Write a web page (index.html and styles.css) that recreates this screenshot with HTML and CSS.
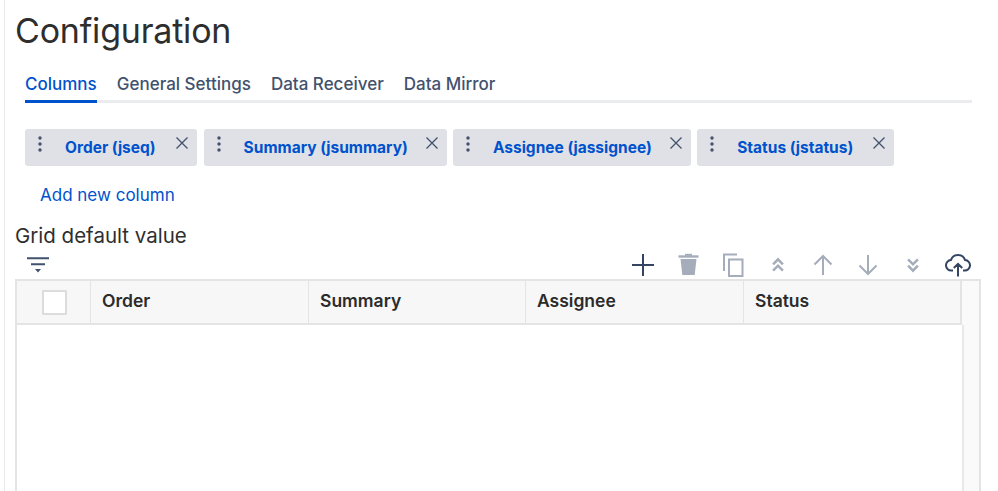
FILE: index.html
```html
<!DOCTYPE html>
<html lang="en">

<head>
  <meta charset="UTF-8">
  <title>Configuration</title>
  <link rel="stylesheet" href="styles.css">
</head>

<body>
  <div class="page">
    <h1>Configuration</h1>

    <div class="tabs">
      <a class="tab active">Columns</a>
      <a class="tab">General Settings</a>
      <a class="tab">Data Receiver</a>
      <a class="tab">Data Mirror</a>
    </div>

    <div class="chips">
      <div class="chip chip-order">
        <svg class="dots" viewBox="0 0 4 16"><circle cx="2" cy="2" r="1.7"/><circle cx="2" cy="8" r="1.7"/><circle cx="2" cy="14" r="1.7"/></svg>
        <span class="chip-label">Order (jseq)</span>
        <svg class="close" viewBox="0 0 12 12"><path d="M.5.5l11 11M11.5.5l-11 11"/></svg>
      </div>
      <div class="chip chip-summary">
        <svg class="dots" viewBox="0 0 4 16"><circle cx="2" cy="2" r="1.7"/><circle cx="2" cy="8" r="1.7"/><circle cx="2" cy="14" r="1.7"/></svg>
        <span class="chip-label">Summary (jsummary)</span>
        <svg class="close" viewBox="0 0 12 12"><path d="M.5.5l11 11M11.5.5l-11 11"/></svg>
      </div>
      <div class="chip chip-assignee">
        <svg class="dots" viewBox="0 0 4 16"><circle cx="2" cy="2" r="1.7"/><circle cx="2" cy="8" r="1.7"/><circle cx="2" cy="14" r="1.7"/></svg>
        <span class="chip-label">Assignee (jassignee)</span>
        <svg class="close" viewBox="0 0 12 12"><path d="M.5.5l11 11M11.5.5l-11 11"/></svg>
      </div>
      <div class="chip chip-status">
        <svg class="dots" viewBox="0 0 4 16"><circle cx="2" cy="2" r="1.7"/><circle cx="2" cy="8" r="1.7"/><circle cx="2" cy="14" r="1.7"/></svg>
        <span class="chip-label">Status (jstatus)</span>
        <svg class="close" viewBox="0 0 12 12"><path d="M.5.5l11 11M11.5.5l-11 11"/></svg>
      </div>
    </div>

    <a class="add-link">Add new column</a>

    <h2>Grid default value</h2>

    <div class="toolbar">
      <svg class="filter" viewBox="0 0 22 16"><path class="dark" d="M0 1.2h22M4 7.2h14"/><path class="fill-dark" d="M8 12h6l-3 3.5z"/></svg>
      <div class="actions">
        <svg class="icon dark" viewBox="0 0 24 24"><path d="M12 1v22M1 12h22"/></svg>
        <svg class="icon" viewBox="0 0 24 24"><path class="fill-grey" d="M4.500 6h16l-1.800 16H6.300z"/><path d="M2.500 3.500h20" stroke-width="2.400"/><path d="M9 1.800h7" stroke-width="2"/></svg>
        <svg class="icon" viewBox="0 0 24 24"><path d="M8 23V6.500h13.500V23zM3 18V1.500h13"/></svg>
        <svg class="icon small" viewBox="0 0 24 24"><path d="M5 11l7-7 7 7M5 20l7-7 7 7"/></svg>
        <svg class="icon" viewBox="0 0 24 24"><path d="M12 22V3M3.500 11.500L12 3l8.500 8.500"/></svg>
        <svg class="icon" viewBox="0 0 24 24"><path d="M12 2v19M3.500 12.500L12 21l8.500-8.500"/></svg>
        <svg class="icon small" viewBox="0 0 24 24"><path d="M5 4l7 7 7-7M5 13l7 7 7-7"/></svg>
        <svg class="icon cloud" viewBox="0 0 26 24"><path d="M8 17.500H6.500a5.200 5.200 0 0 1-.6-10.400 7.500 7.500 0 0 1 14.200 0 5.200 5.200 0 0 1-.6 10.400H18M13 23.500V11M8.800 15L13 10.800 17.200 15"/></svg>
      </div>
    </div>

    <div class="grid">
      <div class="grid-head">
        <div class="cell cell-check"><span class="checkbox"></span></div>
        <div class="cell">Order</div>
        <div class="cell">Summary</div>
        <div class="cell">Assignee</div>
        <div class="cell">Status</div>
      </div>
      <div class="grid-body"></div>
    </div>
  </div>
</body>

</html>
```

FILE: styles.css
```css
html,
body {
  height: 100%;
}

body {
  margin: 0;
  overflow: hidden;
  background-color: #FFFFFF;
  font-family: Inter, "Liberation Sans", sans-serif;
  color: #2E2E2E;
}

.page {
  box-sizing: border-box;
  height: 491px;
  margin-left: 4px;
  padding: 0 16px 0 10px;
  border-left: 1px solid #EBEBEB;
}

h1 {
  margin: 0;
  padding-top: 10px;
  font-size: 34px;
  font-weight: 400;
  line-height: 41px;
  letter-spacing: -0.2px;
}

.tabs {
  display: flex;
  gap: 20px;
  margin: 22px 10px 0 10px;
  border-bottom: 3px solid #EBECF0;
}

.tab {
  padding: 0 0 4px;
  margin-bottom: -3px;
  border-bottom: 3px solid transparent;
  font-size: 17px;
  font-weight: 500;
  line-height: 23px;
  color: #42526E;
}

.tab.active {
  color: #0052CC;
  border-bottom-color: #0052CC;
}

.chips {
  display: flex;
  gap: 6.300px;
  margin: 26px 0 0 10px;
}

.chip {
  box-sizing: border-box;
  display: flex;
  height: 37px;
  padding: 7px 9px 0 13px;
  border-radius: 3px;
  background-color: #DFE1E6;
}

.chip-order {
  width: 172.300px;
}

.chip-summary {
  width: 243px;
}

.chip-assignee {
  width: 238px;
}

.chip-status {
  width: 197px;
}

.dots {
  flex: none;
  width: 4px;
  height: 16px;
  fill: #42526E;
}

.chip-label {
  flex: 1;
  margin: 2px 0 0 23px;
  font-size: 15.500px;
  font-weight: 700;
  line-height: 20px;
  color: #0052CC;
  white-space: nowrap;
}

.close {
  flex: none;
  width: 12px;
  height: 12px;
  margin-top: 1px;
  fill: none;
  stroke: #42526E;
  stroke-width: 1.300;
}

.add-link {
  display: block;
  margin: 18px 0 0 25px;
  font-size: 17px;
  line-height: 23px;
  color: #0052CC;
}

h2 {
  margin: 17px 0 0;
  font-size: 20.500px;
  font-weight: 400;
  line-height: 24px;
}

.toolbar {
  display: flex;
  justify-content: space-between;
  align-items: center;
  height: 24px;
  margin: 4px 0 3px;
}

.filter {
  width: 22px;
  height: 16px;
  margin: 2px 0 0 12px;
  fill: none;
  stroke: #42526E;
  stroke-width: 2;
}

.filter .fill-dark {
  fill: #42526E;
  stroke: none;
}

.actions {
  display: flex;
  align-items: center;
  gap: 21px;
  margin-right: 11px;
  padding-top: 2px;
}

.icon {
  width: 24px;
  height: 24px;
  fill: none;
  stroke: #A5ADBA;
  stroke-width: 2;
}

.icon.dark,
.icon.cloud {
  stroke: #344563;
}

.icon.cloud {
  width: 26px;
  margin-left: -1px;
}

.icon.small {
  stroke-width: 3.600;
  transform: scale(0.7);
}

.icon .fill-grey {
  fill: #A5ADBA;
  stroke: none;
}

.grid {
  box-sizing: border-box;
  width: 966px;
  height: 220px;
  border: 2px solid #E4E4E4;
  border-bottom: 0;
  background-color: #FAFAFA;
}

.grid-head {
  display: grid;
  grid-template-columns: 73px 218px 217px 218px 217px;
  width: 943px;
  height: 42px;
  border-bottom: 2px solid #E4E4E4;
  border-right: 2px solid #E4E4E4;
  background-color: #F7F7F7;
}

.cell {
  display: flex;
  align-items: center;
  padding: 0 0 3px 11px;
  border-left: 1px solid #E4E4E4;
  font-size: 17.500px;
  font-weight: 600;
  color: #2B2B2B;
}

.cell-check {
  padding: 1px 0 0 25px;
  border-left: 0;
}

.checkbox {
  box-sizing: border-box;
  width: 25px;
  height: 25px;
  border: 2px solid #DCDCDC;
  border-radius: 1px;
  background-color: #FFFFFF;
}

.grid-body {
  box-sizing: border-box;
  width: 947px;
  height: 176px;
  border-right: 2px solid #E9E9E9;
  background-color: #FFFFFF;
}
```
